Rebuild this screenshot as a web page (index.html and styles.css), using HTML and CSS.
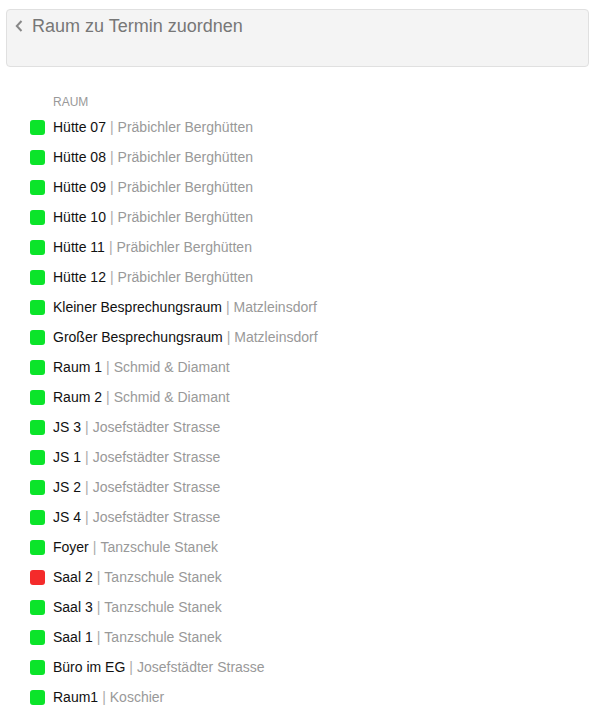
FILE: index.html
```html
<!DOCTYPE html>
<html>

<head>
	<meta charset="utf-8">
	<meta name="viewport" content="width=device-width, initial-scale=1">
	<title>Raum zu Termin zuordnen</title>
	<link rel="stylesheet" href="styles.css">
</head>

<body>
	<div class="header">
		<h1 class="title">
			<svg class="back" width="8" height="12" viewBox="0 0 8 12"><path d="M6.5 1 L1.8 6 L6.5 11" fill="none" stroke="#888" stroke-width="2"/></svg>
			Raum zu Termin zuordnen
		</h1>
	</div>
	<div class="rooms">
		<div class="label">RAUM</div>
		<ul class="list">
			<li><span class="dot free"></span><span class="name">Hütte 07</span><span class="sep">|</span><span class="place">Präbichler Berghütten</span></li>
			<li><span class="dot free"></span><span class="name">Hütte 08</span><span class="sep">|</span><span class="place">Präbichler Berghütten</span></li>
			<li><span class="dot free"></span><span class="name">Hütte 09</span><span class="sep">|</span><span class="place">Präbichler Berghütten</span></li>
			<li><span class="dot free"></span><span class="name">Hütte 10</span><span class="sep">|</span><span class="place">Präbichler Berghütten</span></li>
			<li><span class="dot free"></span><span class="name">Hütte 11</span><span class="sep">|</span><span class="place">Präbichler Berghütten</span></li>
			<li><span class="dot free"></span><span class="name">Hütte 12</span><span class="sep">|</span><span class="place">Präbichler Berghütten</span></li>
			<li><span class="dot free"></span><span class="name">Kleiner Besprechungsraum</span><span class="sep">|</span><span class="place">Matzleinsdorf</span></li>
			<li><span class="dot free"></span><span class="name">Großer Besprechungsraum</span><span class="sep">|</span><span class="place">Matzleinsdorf</span></li>
			<li><span class="dot free"></span><span class="name">Raum 1</span><span class="sep">|</span><span class="place">Schmid &amp; Diamant</span></li>
			<li><span class="dot free"></span><span class="name">Raum 2</span><span class="sep">|</span><span class="place">Schmid &amp; Diamant</span></li>
			<li><span class="dot free"></span><span class="name">JS 3</span><span class="sep">|</span><span class="place">Josefstädter Strasse</span></li>
			<li><span class="dot free"></span><span class="name">JS 1</span><span class="sep">|</span><span class="place">Josefstädter Strasse</span></li>
			<li><span class="dot free"></span><span class="name">JS 2</span><span class="sep">|</span><span class="place">Josefstädter Strasse</span></li>
			<li><span class="dot free"></span><span class="name">JS 4</span><span class="sep">|</span><span class="place">Josefstädter Strasse</span></li>
			<li><span class="dot free"></span><span class="name">Foyer</span><span class="sep">|</span><span class="place">Tanzschule Stanek</span></li>
			<li><span class="dot busy"></span><span class="name">Saal 2</span><span class="sep">|</span><span class="place">Tanzschule Stanek</span></li>
			<li><span class="dot free"></span><span class="name">Saal 3</span><span class="sep">|</span><span class="place">Tanzschule Stanek</span></li>
			<li><span class="dot free"></span><span class="name">Saal 1</span><span class="sep">|</span><span class="place">Tanzschule Stanek</span></li>
			<li><span class="dot free"></span><span class="name">Büro im EG</span><span class="sep">|</span><span class="place">Josefstädter Strasse</span></li>
			<li><span class="dot free"></span><span class="name">Raum1</span><span class="sep">|</span><span class="place">Koschier</span></li>
		</ul>
	</div>
</body>

</html>
```

FILE: styles.css
```css
* {
	margin: 0;
	padding: 0;
	box-sizing: border-box;
}

html {
	font-family: "Liberation Sans", Arial, sans-serif;
	font-size: 14px;
	color: #111;
	background: #fff;
}

body {
	padding: 9px 5px 0 6px;
}

.header {
	height: 58px;
	padding: 5px 8px 0 8px;
	background-color: #f4f4f4;
	border: 1px solid #e0e0e0;
	border-radius: 4px;
}

.title {
	display: flex;
	align-items: center;
	gap: 9px;
	font-size: 18px;
	line-height: 22px;
	font-weight: normal;
	color: #777;
}

.back {
	flex: none;
}

.rooms {
	padding: 28px 0 0 24px;
}

.label {
	padding-left: 23px;
	font-size: 12px;
	line-height: 14px;
	color: #999;
	margin-bottom: 3px;
}

.list {
	list-style: none;
}

.list li {
	display: flex;
	align-items: center;
	height: 30px;
	white-space: nowrap;
}

.dot {
	flex: none;
	width: 15px;
	height: 15px;
	border-radius: 3px;
	margin-right: 8px;
}

.dot.free {
	background-color: #0be42a;
}

.dot.busy {
	background-color: #f42b2b;
}

.sep {
	color: #aaa;
	margin: 0 4px;
}

.place {
	color: #999;
}
```
